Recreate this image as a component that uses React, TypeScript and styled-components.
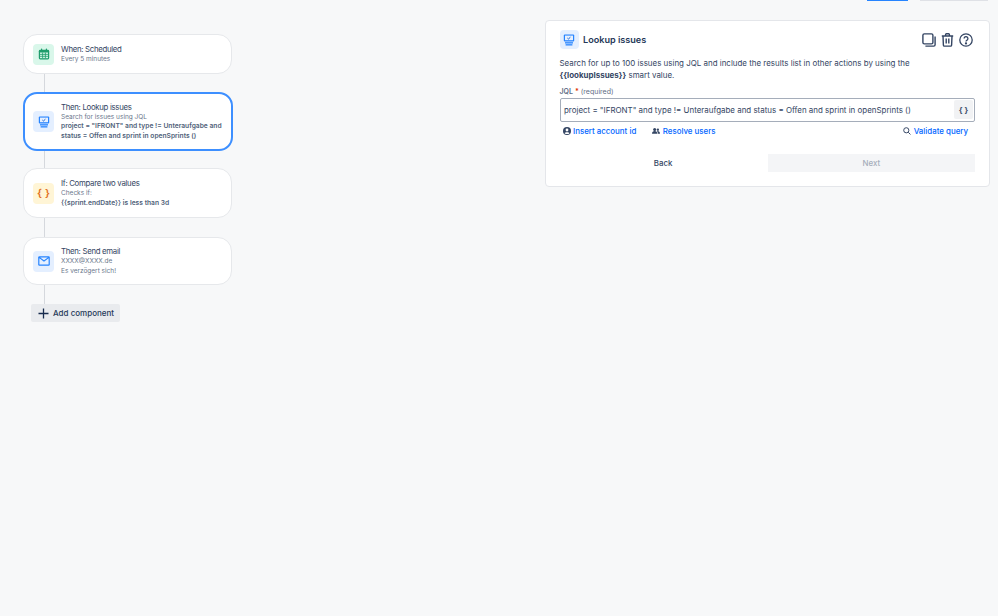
import React from "react";
import styled, { createGlobalStyle } from "styled-components";

const GlobalStyle = createGlobalStyle`
  html, body {
    margin: 0;
    padding: 0;
    height: 100%;
    background: #f7f8f9;
    font-family: "Inter", "Liberation Sans", sans-serif;
    color: #172b4d;
  }
  * { box-sizing: border-box; }
`;

function ScheduleIcon() {
  return (
    <svg width="12" height="12" viewBox="0 0 12 12" fill="none">
      <rect x="0.800" y="1.800" width="10.400" height="9.600" rx="1.400" fill="#1f9d6c" />
      <rect x="3" y="0.600" width="1.200" height="2.200" rx="0.500" fill="#1f9d6c" />
      <rect x="7.800" y="0.600" width="1.200" height="2.200" rx="0.500" fill="#1f9d6c" />
      <rect x="2" y="4.500" width="8" height="5.700" fill="#d3f5e6" />
      <path d="M2 6.400h8M2 8.300h8M4.600 4.500v5.700M7.400 4.500v5.700" stroke="#1f9d6c" strokeWidth="0.800" />
    </svg>
  );
}

function LookupIcon() {
  return (
    <svg width="12" height="12" viewBox="0 0 12 12" fill="none">
      <rect x="0.800" y="0.400" width="10.400" height="7" rx="1" fill="#2684ff" />
      <rect x="2" y="1.600" width="8" height="4.600" fill="#e6f0ff" />
      <path d="M4.400 4.100l1 .9 2-1.800" stroke="#0052cc" strokeWidth="0.900" />
      <rect x="2" y="8.200" width="8" height="1.300" fill="#2684ff" />
      <rect x="2.600" y="10.200" width="6.800" height="1.300" fill="#2684ff" />
    </svg>
  );
}

function MailIcon() {
  return (
    <svg width="12" height="10" viewBox="0 0 12 10" fill="none">
      <rect x="0.200" y="0.200" width="11.600" height="9.600" rx="1.200" fill="#2684ff" />
      <path d="M1.400 2.200L6 5.800l4.600-3.600v6.400H1.400z" fill="#e6f0ff" />
      <path d="M2.200 1.400h7.600L6 4.300z" fill="#e6f0ff" />
    </svg>
  );
}

function CopyIcon() {
  return (
    <svg width="14" height="14" viewBox="0 0 14 14" fill="none" stroke="#344563" strokeWidth="1.400">
      <rect x="0.900" y="0.900" width="10" height="10" rx="1.400" />
      <path d="M13.100 3.400v8.300a1.400 1.400 0 0 1-1.400 1.400H3.400" />
    </svg>
  );
}

function TrashIcon() {
  return (
    <svg width="13" height="14" viewBox="0 0 13 14" fill="none" stroke="#344563" strokeWidth="1.400">
      <path d="M0.800 3h11.400M2 3l.4 9.200a1 1 0 0 0 1 .9h6.200a1 1 0 0 0 1-.9L11 3M4.600 3V1.600a.8.8 0 0 1 .8-.8h2.200a.8.8 0 0 1 .8.800V3M5.200 5.400v5M7.800 5.400v5" />
    </svg>
  );
}

function HelpIcon() {
  return (
    <svg width="14" height="14" viewBox="0 0 14 14" fill="none" stroke="#344563" strokeWidth="1.300">
      <circle cx="7" cy="7" r="6.200" />
      <path d="M5.100 5.500a1.900 1.900 0 1 1 2.900 1.600c-.7.400-1 .8-1 1.500" />
      <circle cx="7" cy="10.400" r="0.500" fill="#344563" />
    </svg>
  );
}

function AccountIcon() {
  return (
    <svg width="8" height="8" viewBox="0 0 8 8">
      <circle cx="4" cy="4" r="4" fill="#344563" />
      <circle cx="4" cy="3" r="1.400" fill="#fff" />
      <path d="M1.600 6.200C2.200 5 5.800 5 6.400 6.200 5.400 7.400 2.600 7.400 1.600 6.200z" fill="#fff" />
    </svg>
  );
}

function UsersIcon() {
  return (
    <svg width="8" height="8" viewBox="0 0 9 8" fill="#344563">
      <circle cx="3" cy="2.200" r="1.700" />
      <circle cx="6.600" cy="2.600" r="1.300" />
      <path d="M0 7c0-2 1.200-3 3-3s3 1 3 3zM6.600 7c0-1.200-.3-2-.9-2.800 1.700-.4 3.300.6 3.300 2.800z" />
    </svg>
  );
}

function SearchIcon() {
  return (
    <svg width="8" height="8" viewBox="0 0 9 9" fill="none" stroke="#344563" strokeWidth="1.100">
      <circle cx="3.700" cy="3.700" r="2.900" />
      <path d="M5.900 5.900L8.400 8.400" />
    </svg>
  );
}

function PlusIcon() {
  return (
    <svg width="11" height="11" viewBox="0 0 11 11" stroke="#172b4d" strokeWidth="1.300">
      <path d="M5.500 0.500v10M0.500 5.500h10" />
    </svg>
  );
}

const iconColors = {
  green: "#d9f7ea",
  blue: "#e4efff",
  yellow: "#fff5d6",
};

export default function App() {
  return (
    <Page>
      <GlobalStyle />
      <TopTabs>
        <TopTab $active />
        <TopTab />
      </TopTabs>
      <Content>
        <Flow>
          <RuleCard $height={40}>
            <IconTile $tone="green"><ScheduleIcon /></IconTile>
            <CardText>
              <CardTitle>When: Scheduled</CardTitle>
              <CardLine>Every 5 minutes</CardLine>
            </CardText>
          </RuleCard>
          <Connector $height={18} />
          <RuleCard $height={59} $selected>
            <IconTile $tone="blue"><LookupIcon /></IconTile>
            <CardText>
              <CardTitle>Then: Lookup issues</CardTitle>
              <CardLine>Search for issues using JQL</CardLine>
              <CardStrong>project = "IFRONT" and type != Unteraufgabe and status = Offen and sprint in openSprints ()</CardStrong>
            </CardText>
          </RuleCard>
          <Connector $height={17} />
          <RuleCard $height={50}>
            <IconTile $tone="yellow"><Braces>{"{ }"}</Braces></IconTile>
            <CardText>
              <CardTitle>If: Compare two values</CardTitle>
              <CardLine>Checks if:</CardLine>
              <CardStrong>{"{{sprint.endDate}} is less than 3d"}</CardStrong>
            </CardText>
          </RuleCard>
          <Connector $height={19} />
          <RuleCard $height={48}>
            <IconTile $tone="blue"><MailIcon /></IconTile>
            <CardText>
              <CardTitle>Then: Send email</CardTitle>
              <CardLine>XXXX@XXXX.de</CardLine>
              <CardLine>Es verzögert sich!</CardLine>
            </CardText>
          </RuleCard>
          <Connector $height={19} />
          <AddButton>
            <PlusIcon />
            Add component
          </AddButton>
        </Flow>
        <Panel>
          <PanelHeader>
            <IconTile $tone="blue" $small><LookupIcon /></IconTile>
            <PanelTitle>Lookup issues</PanelTitle>
            <PanelActions>
              <CopyIcon />
              <TrashIcon />
              <HelpIcon />
            </PanelActions>
          </PanelHeader>
          <Description>
            Search for up to 100 issues using JQL and include the results list in other actions by using the{" "}
            <b>{"{{lookupIssues}}"}</b> smart value.
          </Description>
          <FieldLabel>
            <b>JQL</b> <Required>*</Required> (required)
          </FieldLabel>
          <QueryField>
            <QueryText>project = "IFRONT" and type != Unteraufgabe and status = Offen and sprint in openSprints ()</QueryText>
            <SmartButton>{"{ }"}</SmartButton>
          </QueryField>
          <LinkRow>
            <QueryLink><AccountIcon />Insert account id</QueryLink>
            <QueryLink><UsersIcon />Resolve users</QueryLink>
            <QueryLink $end><SearchIcon />Validate query</QueryLink>
          </LinkRow>
          <Footer>
            <FooterButton>Back</FooterButton>
            <FooterButton $disabled>Next</FooterButton>
          </Footer>
        </Panel>
      </Content>
    </Page>
  );
}

const Page = styled.div`
  width: 998px;
  height: 616px;
  overflow: hidden;
  background: #f7f8f9;
`;

const TopTabs = styled.div`
  display: flex;
  justify-content: flex-end;
  gap: 12px;
  height: 1px;
  padding-right: 10px;
`;

const TopTab = styled.div<{ $active?: boolean }>`
  width: ${(p) => (p.$active ? "41px" : "68px")};
  background: ${(p) => (p.$active ? "#2684ff" : "#dfe1e6")};
`;

const Content = styled.div`
  display: flex;
  align-items: flex-start;
  justify-content: space-between;
  padding: 19px 8.500px 0 23px;
`;

const Flow = styled.div`
  display: flex;
  flex-direction: column;
  align-items: flex-start;
  width: 209px;
  margin-top: 14px;
`;

const RuleCard = styled.div<{ $selected?: boolean; $height: number }>`
  display: flex;
  flex: none;
  align-items: center;
  gap: 7px;
  width: ${(p) => (p.$selected ? "210px" : "100%")};
  height: ${(p) => p.$height}px;
  margin-left: ${(p) => (p.$selected ? "-0.500px" : "0")};
  padding: 0 8px 0 ${(p) => (p.$selected ? "8.500px" : "9px")};
  background: #fff;
  border-radius: 14px;
  border: ${(p) => (p.$selected ? "2px solid #3d8fff" : "1px solid #e6e8eb")};
`;

const IconTile = styled.div<{ $tone: keyof typeof iconColors; $small?: boolean }>`
  display: flex;
  align-items: center;
  justify-content: center;
  flex: none;
  width: ${(p) => (p.$small ? "19px" : "21px")};
  height: ${(p) => (p.$small ? "19px" : "21px")};
  border-radius: 4px;
  background: ${(p) => iconColors[p.$tone]};
`;

const Braces = styled.span`
  font-size: 11px;
  font-weight: 600;
  color: #e2711d;
  white-space: pre;
`;

const CardText = styled.div`
  display: flex;
  flex-direction: column;
  min-width: 0;
`;

const CardTitle = styled.div`
  font-size: 7.800px;
  letter-spacing: -0.300px;
  line-height: 11px;
  color: #344563;
`;

const CardLine = styled.div`
  font-size: 6.500px;
  line-height: 9.500px;
  color: #6b778c;
`;

const CardStrong = styled(CardLine)`
  font-size: 6.700px;
  font-weight: 600;
  color: #505f79;
`;

const Connector = styled.div<{ $height: number }>`
  width: 1px;
  height: ${(p) => p.$height}px;
  margin-left: 21px;
  background: #d5d8dd;
`;

const AddButton = styled.div`
  display: flex;
  align-items: center;
  gap: 4px;
  height: 18px;
  margin-left: 8px;
  padding: 0 6px 0 7px;
  border-radius: 2px;
  background: #e9ebee;
  font-size: 8px;
  font-weight: 500;
  color: #253858;
`;

const Panel = styled.div`
  width: 444.500px;
  height: 167px;
  padding: 9px 13.500px 0;
  background: #fff;
  border: 1px solid #e4e6ea;
  border-radius: 4px;
`;

const PanelHeader = styled.div`
  display: flex;
  align-items: center;
  gap: 4.500px;
  height: 19px;
`;

const PanelTitle = styled.div`
  font-size: 9.100px;
  font-weight: 600;
  color: #253858;
`;

const PanelActions = styled.div`
  display: flex;
  align-items: center;
  gap: 5px;
  margin-left: auto;
  margin-right: 2px;
`;

const Description = styled.p`
  margin: 9px 0 0;
  font-size: 7.950px;
  line-height: 11.500px;
  color: #344563;

  b {
    font-weight: 700;
  }
`;

const FieldLabel = styled.div`
  margin-top: 6px;
  font-size: 7px;
  line-height: 9px;
  color: #5e6c84;

  b {
    font-weight: 600;
  }
`;

const Required = styled.span`
  color: #de350b;
  font-weight: 700;
`;

const QueryField = styled.div`
  display: flex;
  align-items: center;
  justify-content: space-between;
  height: 24px;
  margin-top: 1.500px;
  padding: 0 1px 0 3.500px;
  border: 1px solid #a5adba;
  border-radius: 2px;
`;

const QueryText = styled.div`
  font-size: 7.950px;
  color: #344563;
  white-space: nowrap;
`;

const SmartButton = styled.div`
  display: flex;
  align-items: center;
  justify-content: center;
  width: 19px;
  height: 19px;
  border-radius: 2px;
  background: #f1f2f4;
  font-size: 8px;
  font-weight: 700;
  color: #42526e;
  white-space: pre;
`;

const LinkRow = styled.div`
  display: flex;
  align-items: center;
  gap: 16px;
  height: 10px;
  margin-top: 4px;
  padding: 0 7px 0 3px;
`;

const QueryLink = styled.div<{ $end?: boolean }>`
  display: flex;
  align-items: center;
  gap: 2.500px;
  margin-left: ${(p) => (p.$end ? "auto" : "0")};
  font-size: 7.900px;
  font-weight: 500;
  color: #0065ff;
`;

const Footer = styled.div`
  display: flex;
  gap: 1px;
  margin-top: 18px;
`;

const FooterButton = styled.div<{ $disabled?: boolean }>`
  display: flex;
  align-items: center;
  justify-content: center;
  flex: 1;
  height: 18px;
  font-size: 7.900px;
  font-weight: 500;
  color: ${(p) => (p.$disabled ? "#a5adba" : "#344563")};
  background: ${(p) => (p.$disabled ? "#f4f5f7" : "transparent")};
`;
